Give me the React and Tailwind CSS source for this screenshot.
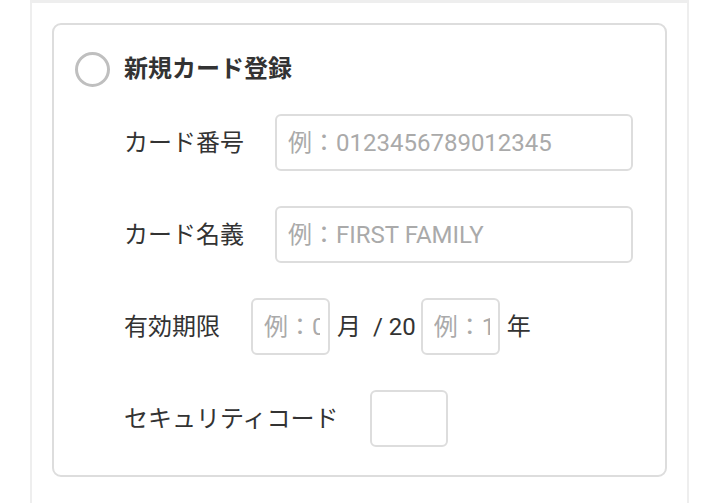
import React from "react";

const font = { fontFamily: "Roboto, 'Noto Sans CJK JP', sans-serif" };

function Field({ className = "", placeholder = "" }) {
  return (
    <input
      type="text"
      placeholder={placeholder}
      className={
        "h-[57px] border-2 border-[#dddddd] rounded-[6px] bg-white pl-[11px] pr-2 text-[24px] text-[#333] placeholder:text-[#aaaaaa] outline-none " +
        className
      }
    />
  );
}

export default function App() {
  return (
    <div className="w-[720px] h-[503px] bg-white overflow-hidden text-[#333]" style={font}>
      <div className="ml-[30px] w-[659px] h-full border-x-2 border-[#eeeeee]">
        <div className="h-[3px] bg-[#eeeeee]" />
        <div className="p-5 pt-5">
          <div className="w-[615px] border-2 border-[#dddddd] rounded-[9px] pt-[26px] pb-[28px] pl-[21px] pr-[32px]">
            {/* title */}
            <div className="flex items-center h-[36px]">
              <span className="w-[35px] h-[35px] rounded-full border-[3px] border-[#bfbfbf] shrink-0" />
              <span className="ml-[14px] text-[24px] font-bold leading-none">新規カード登録</span>
            </div>

            <div className="mt-[27px] pl-[49px] flex flex-col gap-[35px] text-[24px]">
              <div className="flex items-center gap-[31px]">
                <span>カード番号</span>
                <Field className="flex-1" placeholder="例：0123456789012345" />
              </div>
              <div className="flex items-center gap-[31px]">
                <span>カード名義</span>
                <Field className="flex-1" placeholder="例：FIRST FAMILY" />
              </div>
              <div className="flex items-center">
                <span className="mr-[31px]">有効期限</span>
                <Field className="w-[79px]" placeholder="例：01" />
                <span className="ml-[7px]">月</span>
                <span className="ml-[12px]">/ 20</span>
                <Field className="w-[79px] ml-[5px]" placeholder="例：18" />
                <span className="ml-[7px]">年</span>
              </div>
              <div className="flex items-center gap-[31px]">
                <span>セキュリティコード</span>
                <Field className="w-[78px]" />
              </div>
            </div>
          </div>
        </div>
      </div>
    </div>
  );
}
